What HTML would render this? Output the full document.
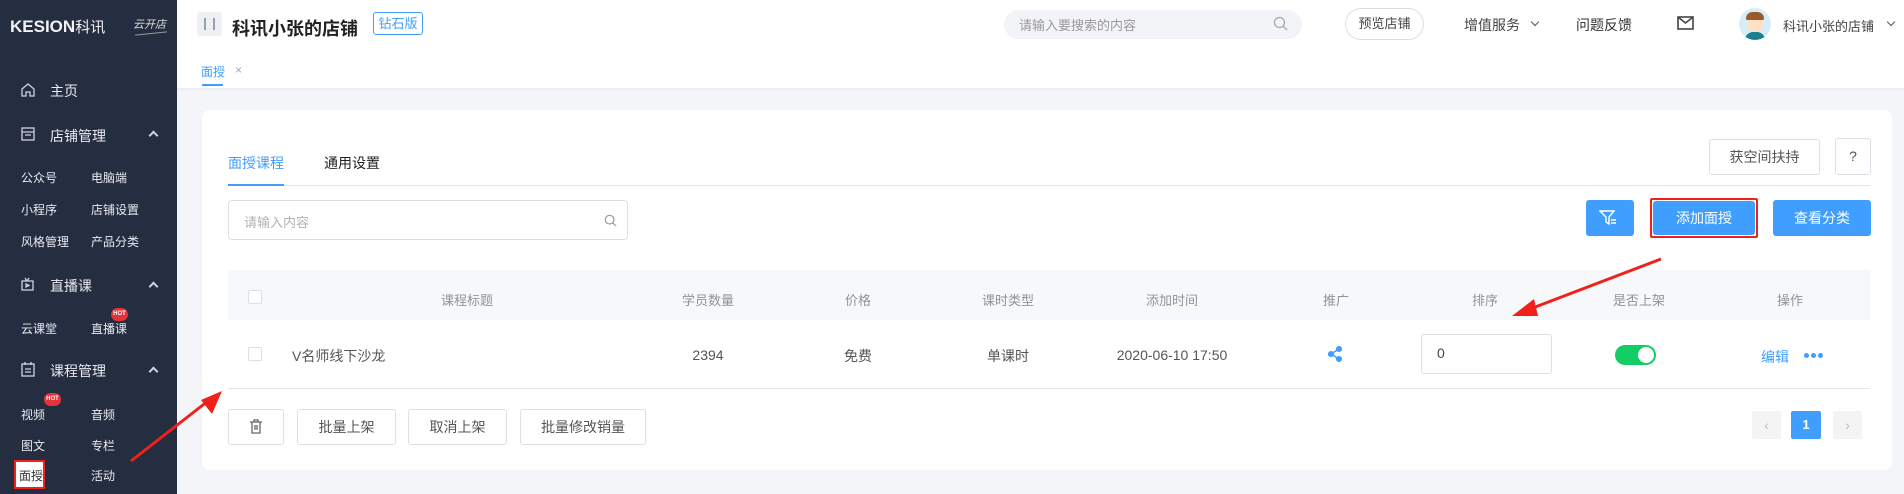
<!DOCTYPE html>
<html><head><meta charset="utf-8"><style>
*{margin:0;padding:0;box-sizing:border-box}
body{width:1904px;height:494px;overflow:hidden;background:#f4f5f8;font-family:"Liberation Sans","Noto Sans CJK SC",sans-serif;position:relative;color:#333;font-size:14px}
.a{position:absolute}
.sb{left:0;top:0;width:177px;height:494px;background:#252d40;color:#e6e8ee}
.sb .a{white-space:nowrap}
.m{font-size:14px;color:#e8eaf0}
.s{font-size:12px;color:#e8eaf0}
.chev{width:7px;height:7px;border-left:2px solid #cfd3dc;border-top:2px solid #cfd3dc;transform:rotate(45deg)}
.hot{width:17px;height:13px;background:#e2343a;border-radius:7px;color:#fff;font-size:6px;font-weight:bold;text-align:center;line-height:13px}
.hdr{left:177px;top:0;width:1727px;height:52px;background:#fff}
.tabs{left:177px;top:52px;width:1727px;height:36px;background:#fff;box-shadow:0 2px 3px rgba(0,0,0,.03)}
.card{left:202px;top:110px;width:1690px;height:360px;background:#fff;border-radius:8px}
.btn{border:1px solid #dcdfe6;border-radius:3px;background:#fff;text-align:center;font-size:14px;color:#555}
.bb{background:#409eff;border-radius:3px;color:#fff;text-align:center;font-size:14px}
.th{font-size:13px;color:#909399;transform:translateX(-50%);top:290px}
.td{font-size:14px;color:#555;transform:translateX(-50%);top:346px}
.cb{width:14px;height:14px;border:1px solid #dcdfe6;border-radius:2px;background:#fff}
</style></head><body>
<div class="a sb">
 <div class="a" style="left:10px;top:16px;font-size:17px;font-weight:bold;letter-spacing:0px;color:#f2f2f2">KESION<span style="font-weight:normal;font-size:15px">科讯</span></div>
 <div class="a" style="left:133px;top:16px;font-size:11px;font-style:italic;color:#ddd">云开店</div>
 <div class="a" style="left:135px;top:33px;width:32px;height:1px;background:#999;transform:rotate(-6deg)"></div>
 <svg class="a" style="left:20px;top:82px" width="16" height="16" viewBox="0 0 16 16" fill="none" stroke="#cfd3dc" stroke-width="1.3"><path d="M2 7L8 2l6 5v7H10V10H6v4H2z"/></svg>
 <div class="a m" style="left:50px;top:81px">主页</div>
 <svg class="a" style="left:20px;top:126px" width="16" height="16" viewBox="0 0 16 16" fill="none" stroke="#cfd3dc" stroke-width="1.3"><rect x="2" y="2" width="12" height="12"/><path d="M2 6h12M5 9h6"/></svg>
 <div class="a m" style="left:50px;top:126px">店铺管理</div><div class="a chev" style="left:150px;top:132px"></div>
 <div class="a s" style="left:21px;top:169px">公众号</div><div class="a s" style="left:91px;top:169px">电脑端</div>
 <div class="a s" style="left:21px;top:201px">小程序</div><div class="a s" style="left:91px;top:201px">店铺设置</div>
 <div class="a s" style="left:21px;top:233px">风格管理</div><div class="a s" style="left:91px;top:233px">产品分类</div>
 <svg class="a" style="left:20px;top:276px" width="16" height="16" viewBox="0 0 16 16" fill="none" stroke="#cfd3dc" stroke-width="1.3"><rect x="2" y="5" width="11" height="9"/><path d="M6 8l3 1.5L6 11z M5 2l2 3M9 2l-2 3"/></svg>
 <div class="a m" style="left:50px;top:276px">直播课</div><div class="a chev" style="left:150px;top:283px"></div>
 <div class="a s" style="left:21px;top:320px">云课堂</div><div class="a s" style="left:91px;top:320px">直播课</div>
 <div class="a hot" style="left:111px;top:308px">HOT</div>
 <svg class="a" style="left:20px;top:361px" width="16" height="16" viewBox="0 0 16 16" fill="none" stroke="#cfd3dc" stroke-width="1.3"><rect x="2" y="3" width="12" height="12"/><path d="M5 1v3M11 1v3M5 8h6M5 11h6"/></svg>
 <div class="a m" style="left:50px;top:361px">课程管理</div><div class="a chev" style="left:150px;top:368px"></div>
 <div class="a s" style="left:21px;top:406px">视频</div><div class="a s" style="left:91px;top:406px">音频</div>
 <div class="a hot" style="left:44px;top:393px">HOT</div>
 <div class="a s" style="left:21px;top:437px">图文</div><div class="a s" style="left:91px;top:437px">专栏</div>
 <div class="a" style="left:14px;top:460px;width:31px;height:29px;border:2px solid #f0201a;background:#fff"></div>
 <div class="a s" style="left:19px;top:467px;color:#333">面授</div><div class="a s" style="left:91px;top:467px">活动</div>
</div>
<div class="a hdr"></div>
<div class="a" style="left:197px;top:12px;width:25px;height:24px;background:#eef0f4;border-radius:3px"></div>
<div class="a" style="left:204px;top:18px;width:11px;height:12px;border-left:2px solid #9aa0ad;border-right:2px solid #9aa0ad"></div>
<div class="a" style="left:232px;top:15px;font-size:18px;font-weight:bold;color:#222">科讯小张的店铺</div>
<div class="a" style="left:373px;top:12px;width:50px;height:23px;border:1px solid #409eff;border-radius:3px;color:#409eff;font-size:13px;text-align:center;line-height:21px">钻石版</div>
<div class="a" style="left:1004px;top:10px;width:298px;height:29px;background:#f3f4f7;border-radius:15px"></div>
<div class="a" style="left:1019px;top:15px;font-size:13px;color:#999">请输入要搜索的内容</div>
<svg class="a" style="left:1273px;top:16px" width="15" height="15" viewBox="0 0 15 15" fill="none" stroke="#aaa" stroke-width="1.3"><circle cx="6.5" cy="6.5" r="5"/><path d="M10 10l4 4"/></svg>
<div class="a" style="left:1345px;top:8px;width:79px;height:32px;border:1px solid #dcdfe6;border-radius:16px;font-size:13px;text-align:center;line-height:30px;color:#444">预览店铺</div>
<div class="a" style="left:1464px;top:15px;font-size:14px;color:#444">增值服务</div>
<div class="a" style="left:1532px;top:19px;width:6px;height:6px;border-right:1.3px solid #555;border-bottom:1.3px solid #555;transform:rotate(45deg)"></div>
<div class="a" style="left:1576px;top:15px;font-size:14px;color:#333">问题反馈</div>
<svg class="a" style="left:1677px;top:16px" width="17" height="14" viewBox="0 0 17 14" fill="none" stroke="#444" stroke-width="1.6"><rect x="1" y="1" width="15" height="12"/><path d="M1 1l7.5 6L16 1"/></svg>
<div class="a" style="left:1739px;top:8px;width:32px;height:32px;border-radius:50%;background:#d6eef8;overflow:hidden">
 <div class="a" style="left:8px;top:7px;width:16px;height:17px;border-radius:50%;background:#fde0c6"></div>
 <div class="a" style="left:7px;top:4px;width:18px;height:8px;border-radius:9px 9px 2px 2px;background:#9a5a2c"></div>
 <div class="a" style="left:6px;top:24px;width:20px;height:10px;border-radius:8px 8px 0 0;background:#1d7f8c"></div>
</div>
<div class="a" style="left:1783px;top:16px;font-size:13px;color:#444">科讯小张的店铺</div>
<div class="a" style="left:1888px;top:19px;width:6px;height:6px;border-right:1.3px solid #555;border-bottom:1.3px solid #555;transform:rotate(45deg)"></div>
<div class="a tabs"></div>
<div class="a" style="left:201px;top:63px;font-size:12px;color:#409eff">面授</div>
<div class="a" style="left:202px;top:84px;width:21px;height:2px;background:#409eff"></div>
<div class="a" style="left:235px;top:63px;font-size:12px;color:#9ab">×</div>
<div class="a card"></div>
<div class="a" style="left:228px;top:153px;font-size:14px;color:#409eff">面授课程</div>
<div class="a" style="left:324px;top:153px;font-size:14px;color:#222">通用设置</div>
<div class="a" style="left:228px;top:185px;width:1642px;height:1px;background:#e4e7ed"></div>
<div class="a" style="left:228px;top:184px;width:56px;height:2px;background:#409eff"></div>
<div class="a btn" style="left:1709px;top:139px;width:111px;height:36px;line-height:34px">获空间扶持</div>
<div class="a btn" style="left:1835px;top:138px;width:36px;height:37px;line-height:35px">?</div>
<div class="a" style="left:228px;top:200px;width:400px;height:40px;border:1px solid #dcdfe6;border-radius:4px"></div>
<div class="a" style="left:244px;top:212px;font-size:13px;color:#b0b3b8">请输入内容</div>
<svg class="a" style="left:604px;top:214px" width="13" height="13" viewBox="0 0 15 15" fill="none" stroke="#999" stroke-width="1.4"><circle cx="6.5" cy="6.5" r="5"/><path d="M10 10l4 4"/></svg>
<div class="a bb" style="left:1586px;top:200px;width:48px;height:36px"></div>
<svg class="a" style="left:1599px;top:209px" width="18" height="18" viewBox="0 0 18 18" fill="none" stroke="#fff" stroke-width="1.4"><path d="M1 2h14l-5 6v7l-3-2V8z M12 11h5M12 14h5"/></svg>
<div class="a" style="left:1650px;top:198px;width:108px;height:40px;border:2px solid #f0201a;border-radius:2px"></div>
<div class="a bb" style="left:1653px;top:201px;width:102px;height:34px;line-height:34px">添加面授</div>
<div class="a bb" style="left:1773px;top:200px;width:98px;height:36px;line-height:36px">查看分类</div>
<div class="a" style="left:228px;top:270px;width:1642px;height:50px;background:#f7f8fa"></div>
<div class="a cb" style="left:248px;top:290px"></div>
<div class="a th" style="left:467px">课程标题</div><div class="a th" style="left:708px">学员数量</div>
<div class="a th" style="left:858px">价格</div><div class="a th" style="left:1008px">课时类型</div>
<div class="a th" style="left:1172px">添加时间</div><div class="a th" style="left:1336px">推广</div>
<div class="a th" style="left:1485px">排序</div><div class="a th" style="left:1639px">是否上架</div>
<div class="a th" style="left:1790px">操作</div>
<div class="a cb" style="left:248px;top:347px"></div>
<div class="a" style="left:292px;top:346px;font-size:14px;color:#555">V名师线下沙龙</div>
<div class="a td" style="left:708px;top:347px">2394</div><div class="a td" style="left:858px">免费</div>
<div class="a td" style="left:1008px">单课时</div><div class="a td" style="left:1172px;top:347px">2020-06-10 17:50</div>
<svg class="a" style="left:1328px;top:346px" width="14" height="16" viewBox="0 0 14 16" fill="#409eff" stroke="#409eff" stroke-width="1.5"><circle cx="11" cy="3" r="2.3"/><circle cx="3" cy="8" r="2.3"/><circle cx="11" cy="13" r="2.3"/><path d="M11 3L3 8l8 5" fill="none"/></svg>
<div class="a" style="left:1421px;top:334px;width:131px;height:40px;border:1px solid #dcdfe6;border-radius:3px"></div>
<div class="a" style="left:1437px;top:345px;font-size:14px;color:#444">0</div>
<div class="a" style="left:1615px;top:345px;width:41px;height:20px;border-radius:10px;background:#13ce66"></div>
<div class="a" style="left:1638px;top:347px;width:16px;height:16px;border-radius:50%;background:#fff"></div>
<div class="a" style="left:1761px;top:347px;font-size:14px;color:#409eff">编辑</div>
<div class="a" style="left:1804px;top:353px;width:5px;height:5px;border-radius:50%;background:#409eff"></div>
<div class="a" style="left:1811px;top:353px;width:5px;height:5px;border-radius:50%;background:#409eff"></div>
<div class="a" style="left:1818px;top:353px;width:5px;height:5px;border-radius:50%;background:#409eff"></div>
<div class="a" style="left:228px;top:388px;width:1642px;height:1px;background:#e4e7ed"></div>
<div class="a btn" style="left:228px;top:409px;width:56px;height:36px"></div>
<svg class="a" style="left:249px;top:419px" width="14" height="15" viewBox="0 0 14 15" fill="none" stroke="#666" stroke-width="1.3"><path d="M1 3h12M5 3V1h4v2M3 3v11h8V3M6 6v5M8 6v5"/></svg>
<div class="a btn" style="left:297px;top:409px;width:99px;height:36px;line-height:34px">批量上架</div>
<div class="a btn" style="left:408px;top:409px;width:99px;height:36px;line-height:34px">取消上架</div>
<div class="a btn" style="left:520px;top:409px;width:126px;height:36px;line-height:34px">批量修改销量</div>
<div class="a" style="left:1752px;top:411px;width:29px;height:28px;background:#f4f4f5;border-radius:2px;color:#bbb;text-align:center;line-height:28px">‹</div>
<div class="a" style="left:1791px;top:411px;width:30px;height:28px;background:#409eff;border-radius:2px;color:#fff;text-align:center;line-height:28px;font-weight:bold;font-size:13px">1</div>
<div class="a" style="left:1833px;top:411px;width:29px;height:28px;background:#f4f4f5;border-radius:2px;color:#bbb;text-align:center;line-height:28px">›</div>
<svg class="a" style="left:0;top:0" width="1904" height="494">
 <path d="M1661 259L1530 309" stroke="#f0201a" stroke-width="3"/>
 <polygon points="1512,316 1534,299 1538,316" fill="#f0201a"/>
 <path d="M131 461L208 401" stroke="#f0201a" stroke-width="3"/>
 <polygon points="222,391 212,414 201,400" fill="#f0201a"/>
</svg>
</body></html>
